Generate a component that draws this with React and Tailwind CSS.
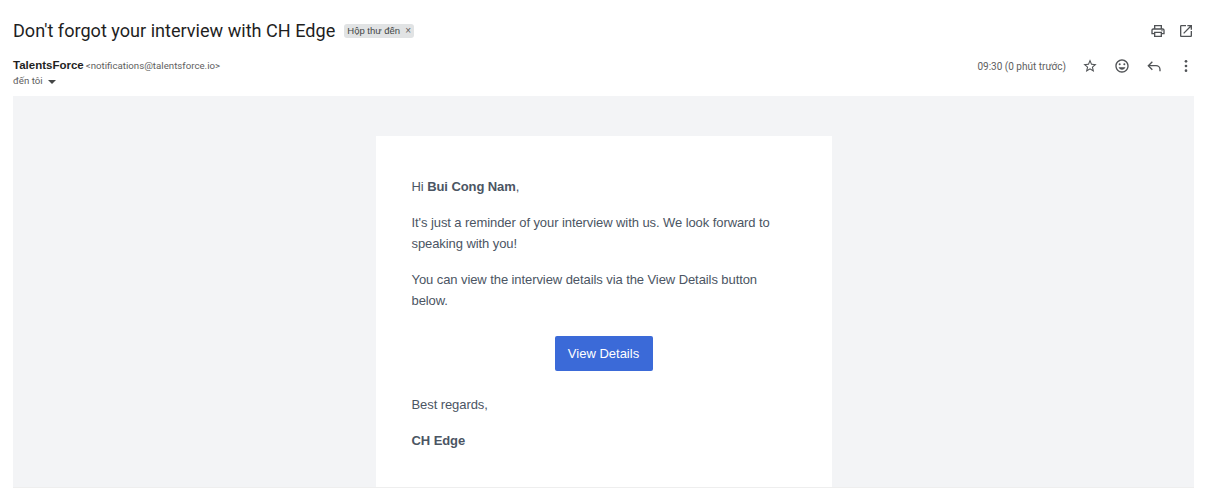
import React from "react";

const Icon = ({ size = 20, className = "", children }) => (
  <svg width={size} height={size} viewBox="0 0 24 24" fill="#505356" className={className}>
    {children}
  </svg>
);

const PrintIcon = () => (
  <Icon size={16}>
    <path d="M19 8h-1V3H6v5H5c-1.66 0-3 1.34-3 3v6h4v4h12v-4h4v-6c0-1.66-1.34-3-3-3zM8 5h8v3H8V5zm8 12v2H8v-4h8v2zm2-2v-2H6v2H4v-4c0-.55.45-1 1-1h14c.55 0 1 .45 1 1v4h-2z" />
    <circle cx="18" cy="11.5" r="1" />
  </Icon>
);

const OpenIcon = () => (
  <Icon size={16}>
    <path d="M19 19H5V5h7V3H5c-1.11 0-2 .9-2 2v14c0 1.1.89 2 2 2h14c1.1 0 2-.9 2-2v-7h-2v7zM14 3v2h3.59l-9.83 9.83 1.41 1.41L19 6.41V10h2V3h-7z" />
  </Icon>
);

const StarIcon = () => (
  <Icon size={16}>
    <path d="M22 9.24l-7.19-.62L12 2 9.19 8.63 2 9.24l5.46 4.73L5.82 21 12 17.27 18.18 21l-1.63-7.03L22 9.24zM12 15.4l-3.76 2.27 1-4.28-3.32-2.88 4.38-.38L12 6.1l1.71 4.04 4.38.38-3.32 2.88 1 4.28L12 15.4z" />
  </Icon>
);

const EmojiIcon = () => (
  <Icon size={16}>
    <path d="M11.99 2C6.47 2 2 6.48 2 12s4.47 10 9.99 10C17.52 22 22 17.52 22 12S17.52 2 11.99 2zM12 20c-4.42 0-8-3.58-8-8s3.58-8 8-8 8 3.58 8 8-3.58 8-8 8z" />
    <circle cx="15.5" cy="9.5" r="1.5" />
    <circle cx="8.5" cy="9.5" r="1.5" />
    <path d="M12 17.5c2.33 0 4.31-1.46 5.11-3.5H6.89c.8 2.04 2.78 3.5 5.11 3.5z" />
  </Icon>
);

const ReplyIcon = () => (
  <svg width={16} height={16} viewBox="0 0 24 24" fill="none" stroke="#505356" strokeWidth="2">
    <path d="M9.5 5.5L3.5 11.5l6 6" />
    <path d="M3.5 11.5H15a6 6 0 0 1 6 6V20" />
  </svg>
);

const MoreIcon = () => (
  <Icon size={16}>
    <circle cx="12" cy="5" r="2" />
    <circle cx="12" cy="12" r="2" />
    <circle cx="12" cy="19" r="2" />
  </Icon>
);

const App = () => {
  return (
    <div className="h-[498px] w-[1208px] overflow-hidden bg-white font-['Roboto',sans-serif]">
      {/* Subject row */}
      <div className="flex h-[44px] items-end pl-[13px] pr-[14px]">
        <div className="flex h-[26px] w-full items-center">
          <h1 className="text-[18.1px] leading-[26px] font-normal text-[#1f1f1f]">Don't forgot your interview with CH Edge</h1>
          <span className="ml-[9px] flex h-[14px] w-[70px] items-center rounded-[3px] bg-[#e1e3e4] pl-[3px] font-['Liberation_Sans',sans-serif] text-[9.5px] text-[#444746]">
            Hộp thư đến
            <span className="ml-[5px] text-[10px] leading-none text-[#5e5e5e]">×</span>
          </span>
          <div className="ml-auto flex items-center gap-[12px]">
            <PrintIcon />
            <OpenIcon />
          </div>
        </div>
      </div>

      {/* Sender row */}
      <div className="flex h-[52px] items-start pl-[13px] pr-[14px] pt-[15px]">
        <div>
          <div className="flex h-[14px] items-center">
            <span className="font-['Liberation_Sans',sans-serif] text-[11.5px] font-bold text-[#1f1f1f]">TalentsForce</span>
            <span className="ml-[2px] text-[9.7px] text-[#5e5e5e]">&lt;notifications@talentsforce.io&gt;</span>
          </div>
          <div className="mt-[2px] flex h-[12px] items-center text-[9.7px] text-[#5e5e5e]">
            đến tôi
            <span className="ml-[5px] mt-[1px] h-0 w-0 border-x-[4px] border-t-[4px] border-x-transparent border-t-[#444746]"></span>
          </div>
        </div>
        <div className="ml-auto flex h-[14px] items-center">
          <span className="mr-[16px] text-[10px] text-[#5e5e5e]">09:30 (0 phút trước)</span>
          <div className="flex items-center gap-[16px]">
            <StarIcon />
            <EmojiIcon />
            <ReplyIcon />
            <MoreIcon />
          </div>
        </div>
      </div>

      {/* Message body */}
      <div className="ml-[13px] h-[392px] w-[1181px] overflow-hidden border-b border-[#eeeeee] bg-[#f3f4f6] pt-10">
        <div className="mx-auto h-[400px] w-[456px] bg-white px-9 pt-10 font-['Liberation_Sans',sans-serif] text-[13px] leading-[21px] tracking-[-0.08px] text-[#4b5563]">
          <p className="mb-[15px]">
            Hi <strong>Bui Cong Nam</strong>,
          </p>
          <p className="mb-[15px]">It's just a reminder of your interview with us. We look forward to speaking with you!</p>
          <p className="mb-[15px]">You can view the interview details via the View Details button below.</p>
          <div className="mb-[23px] flex justify-center pt-[10px]">
            <a className="flex h-[35px] w-[98px] items-center justify-center rounded-[2px] bg-[#3b6ad8] text-white tracking-normal">
              View Details
            </a>
          </div>
          <p className="mb-[15px]">Best regards,</p>
          <p>
            <strong>CH Edge</strong>
          </p>
        </div>
      </div>
    </div>
  );
};

export default App;
